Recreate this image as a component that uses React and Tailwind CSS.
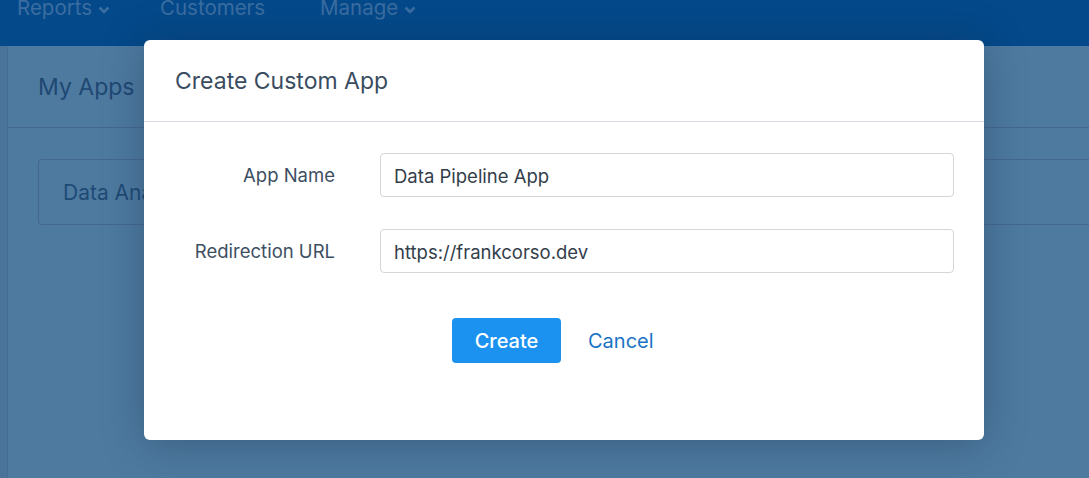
export default function App() {
  return (
    <div className="relative h-[478px] w-[1089px] overflow-hidden bg-[#4e7aa0] font-['Inter',sans-serif]">
      {/* page behind the overlay */}
      <div className="flex h-[46px] items-start bg-[#04498a] pl-[17px] text-[20.5px] leading-none text-[#3b6da1]">
        <div className="-mt-[2px] flex w-[143px] items-center gap-[5px]">
          Reports
          <svg width="14" height="14" viewBox="0 0 14 14" className="mt-[3px]">
            <path d="M2.5 4.5l4.5 4.5 4.5-4.5" fill="none" stroke="currentColor" strokeWidth="2.6" />
          </svg>
        </div>
        <div className="-mt-[2px] w-[160px]">Customers</div>
        <div className="-mt-[2px] flex items-center gap-[5px]">
          Manage
          <svg width="14" height="14" viewBox="0 0 14 14" className="mt-[3px]">
            <path d="M2.5 4.5l4.5 4.5 4.5-4.5" fill="none" stroke="currentColor" strokeWidth="2.6" />
          </svg>
        </div>
      </div>
      <div className="flex h-[432px]">
        <div className="w-[8px] border-r border-[#466d92] bg-[#4a7499]" />
        <div className="flex-1">
          <div className="flex h-[82px] items-center border-b border-[#44698d] pl-[30px] pt-[2px] text-[23px] text-[#1f4872]">
            My Apps
          </div>
          <div className="pl-[30px] pt-[31px]">
            <div className="flex h-[66px] items-center rounded-l-[4px] border border-r-0 border-[#44698d] pl-[24px] pt-[2px] text-[21px] text-[#1f4a76]">
              Data Analytics App
            </div>
          </div>
        </div>
      </div>

      {/* modal */}
      <div className="absolute inset-0 pl-[144px] pt-[40px]">
        <div className="w-[840px] rounded-[6px] bg-white shadow-[0_4px_40px_rgba(20,40,70,0.35)]">
          <div className="flex h-[82px] items-center border-b border-[#d7dce2] pl-[31px] pt-[1px] text-[23px] text-[#3a4c5f]">
            Create Custom App
          </div>
          <div className="px-[30px] pb-[77px] pt-[31px]">
            <div className="flex flex-col gap-[32px]">
              <div className="flex items-center">
                <label className="w-[161px] pt-[2px] text-right text-[18.5px] text-[#3d4f62]">App Name</label>
                <input
                  readOnly
                  value="Data Pipeline App"
                  className="ml-[45px] h-[44px] flex-1 rounded-[4px] border border-[#d6d6d6] px-[13px] pt-[1px] text-[18.5px] text-[#333e4a] outline-none"
                />
              </div>
              <div className="flex items-center">
                <label className="w-[161px] pt-[2px] text-right text-[18.5px] text-[#3d4f62]">Redirection URL</label>
                <input
                  readOnly
                  value="https://frankcorso.dev"
                  className="ml-[45px] h-[44px] flex-1 rounded-[4px] border border-[#d6d6d6] px-[13px] pt-[1px] text-[18.5px] text-[#333e4a] outline-none"
                />
              </div>
            </div>
            <div className="mt-[45px] flex items-center gap-[27px] pl-[278px]">
              <button className="h-[45px] w-[109px] rounded-[4px] bg-[#1b92f0] text-[20px] font-medium text-white">
                Create
              </button>
              <button className="text-[20px] text-[#1a74c6]">Cancel</button>
            </div>
          </div>
        </div>
      </div>
    </div>
  );
}
